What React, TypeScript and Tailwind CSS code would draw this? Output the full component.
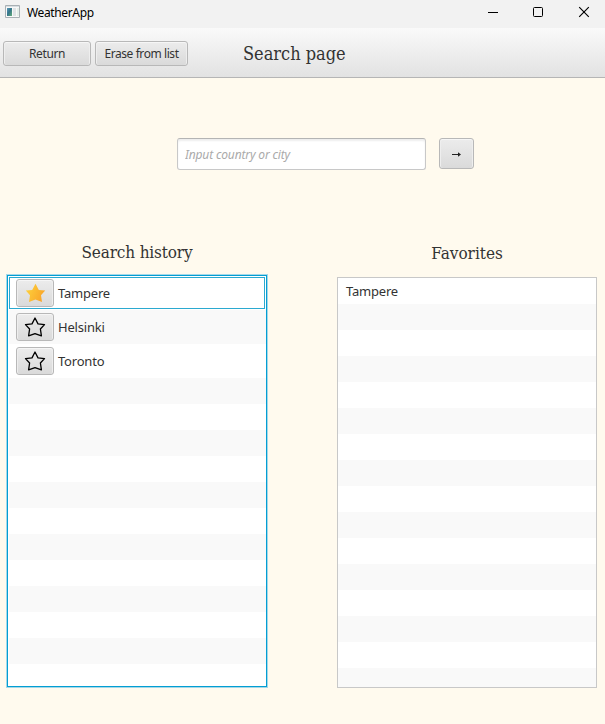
import type { ReactNode } from "react";

const sans = "font-['Noto_Sans',sans-serif]";
const serif = "font-['DejaVu_Serif_Condensed','DejaVu_Serif',serif] [font-stretch:condensed]";

function Button({ className, children }: { className: string; children: ReactNode }) {
  return (
    <button
      className={`flex shrink-0 items-center justify-center rounded-[3px] border border-[#b8b8b8] bg-linear-to-b from-[#ececec] to-[#dadada] text-[#333] shadow-[inset_0_1px_0_#f6f6f6,inset_1px_0_0_#eeeeee,inset_-1px_0_0_#eeeeee] ${className}`}
    >
      {children}
    </button>
  );
}

function Star({ filled }: { filled: boolean }) {
  return (
    <svg width="22" height="22" viewBox="0 0 22 22" fill="none">
      <defs>
        <linearGradient id="gold" x1="0" y1="0" x2="1" y2="0.4">
          <stop offset="0" stopColor="#fed53d" />
          <stop offset="1" stopColor="#f9a72b" />
        </linearGradient>
      </defs>
      {filled ? (
        <path d="M11.5 1.8L14.8 8L21.2 8.6L17 13.2L18 20L11.5 17.4L5 20L6 13.2L1.8 8.6L8.2 8Z" fill="url(#gold)" />
      ) : (
        <path d="M11 2L14 7.9L20.5 8.6L16.4 13L17.4 19.8L11 17.6L4.6 19.8L5.6 13L1.5 8.6L8 7.9Z" stroke="#000" strokeWidth="1.3" strokeLinejoin="round" />
      )}
    </svg>
  );
}

function HistoryRow({ name, filled = false, className }: { name: string; filled?: boolean; className: string }) {
  return (
    <div className={`flex h-[34px] shrink-0 items-center pl-2 ${className}`}>
      <Button className="h-7 w-[38px]">
        <Star filled={filled} />
      </Button>
      <span className="ml-1 pt-[2px] text-[13px] tracking-[-0.2px]">{name}</span>
    </div>
  );
}

function TitleBar() {
  return (
    <header className="flex h-7 items-start bg-[#f2f2f2] text-black">
      <svg className="mt-[5px] ml-[5px]" width="16" height="14" viewBox="0 0 16 14">
        <defs>
          <linearGradient id="screen" x1="0" y1="0" x2="1" y2="1">
            <stop stopColor="#5a9ab8" />
            <stop offset=".45" stopColor="#35758c" />
            <stop offset="1" stopColor="#65ad78" />
          </linearGradient>
        </defs>
        <path d="M.5.5h14v12H.5z" fill="#f8f8f8" stroke="#a9b0b4" />
        <path d="M1 1h13v1H1z" fill="#d7dee2" />
        <path d="M2 3h5v8H2z" fill="url(#screen)" />
        <path d="M8 3h3v8H8z" fill="#dfe3e5" />
        <path d="M12 3h2v8h-2z" fill="#e4eee8" />
      </svg>
      <span className="ml-[6px] pt-[5px] text-[12px] leading-4 tracking-[-0.36px]">WeatherApp</span>
      <svg className="ml-auto" width="125" height="24" viewBox="0 0 125 24" fill="none" stroke="#000">
        <path d="M8 12.5h10" />
        <rect x="53.5" y="7.5" width="9" height="9" rx="1" />
        <path d="M99.2 7.2l9.6 9.6M108.8 7.2l-9.6 9.6" strokeWidth="1.15" />
      </svg>
    </header>
  );
}

export default function App() {
  return (
    <div className={`flex h-[724px] w-[605px] flex-col overflow-hidden bg-[#fffaee] text-[#333] ${sans}`}>
      <TitleBar />
      <nav className="flex h-[50px] items-start border-b border-[#b5b5b5] bg-linear-to-b from-[#fafafa] to-[#e2e2e2] pt-[13px] pl-[3px]">
        <Button className="h-[25px] w-[88px] pt-px text-[12px] tracking-[-0.42px]">Return</Button>
        <Button className="ml-1 h-[25px] w-[93px] pt-px text-[12px] tracking-[-0.42px]">Erase from list</Button>
        <h1 className={`ml-[55px] text-[18px] leading-[26px] whitespace-nowrap ${serif}`}>Search page</h1>
      </nav>

      <div className="mt-[60px] flex h-8 items-start pl-[177px]">
        <input
          className="h-8 w-[249px] rounded-[3px] border border-[#c8c8c8] border-t-[#b4b4b4] bg-white px-[7px] pt-px text-[12px] tracking-[-0.15px] italic shadow-[inset_0_2px_2px_#eeeeee] outline-none placeholder:text-[#aaa]"
          placeholder="Input country or city"
        />
        <Button className="ml-[13px] h-[31px] w-[35px] text-[12px]">
          <svg width="10" height="6" viewBox="0 0 10 6">
            <path d="M0 3.5h7" stroke="#222" strokeWidth="1" />
            <path d="M6 1.3L9 3.5L6 5.7z" fill="#222" />
          </svg>
        </Button>
      </div>

      <main className="mt-[68px] flex">
        <section className="ml-[6px] w-[262px]">
          <h2 className={`flex h-9 items-start justify-center text-[17px] leading-7 tracking-[-0.15px] ${serif}`}>Search history</h2>
          <div className="h-[414px] border border-[#a5d8e8]">
            <div className="flex h-[412px] flex-col overflow-hidden border border-[#039ed3] bg-white">
              <HistoryRow name="Tampere" filled className="shadow-[inset_0_0_0_1px_white,inset_0_0_0_2px_#2ba9d0]" />
              <HistoryRow name="Helsinki" className="ml-px bg-[#f9f9f9] pl-[7px]!" />
              <HistoryRow name="Toronto" className="" />
              {Array.from({ length: 12 }, (_, i) => (
                <div key={i} className="ml-px h-[26px] shrink-0 odd:bg-white even:bg-[#f9f9f9]" />
              ))}
            </div>
          </div>
        </section>
        <section className="ml-[69px] w-[260px]">
          <h2 className={`flex h-[39px] items-start justify-center pt-px text-[17px] leading-7 ${serif}`}>Favorites</h2>
          <div className="h-[411px] overflow-hidden border border-[#c8c8c8] bg-white">
            <div className="flex h-[26px] items-center pt-[2px] pl-2 text-[13px] tracking-[-0.2px]">Tampere</div>
            {Array.from({ length: 15 }, (_, i) => (
              <div key={i} className="h-[26px] odd:bg-white even:bg-[#f9f9f9]" />
            ))}
          </div>
        </section>
      </main>
    </div>
  );
}
